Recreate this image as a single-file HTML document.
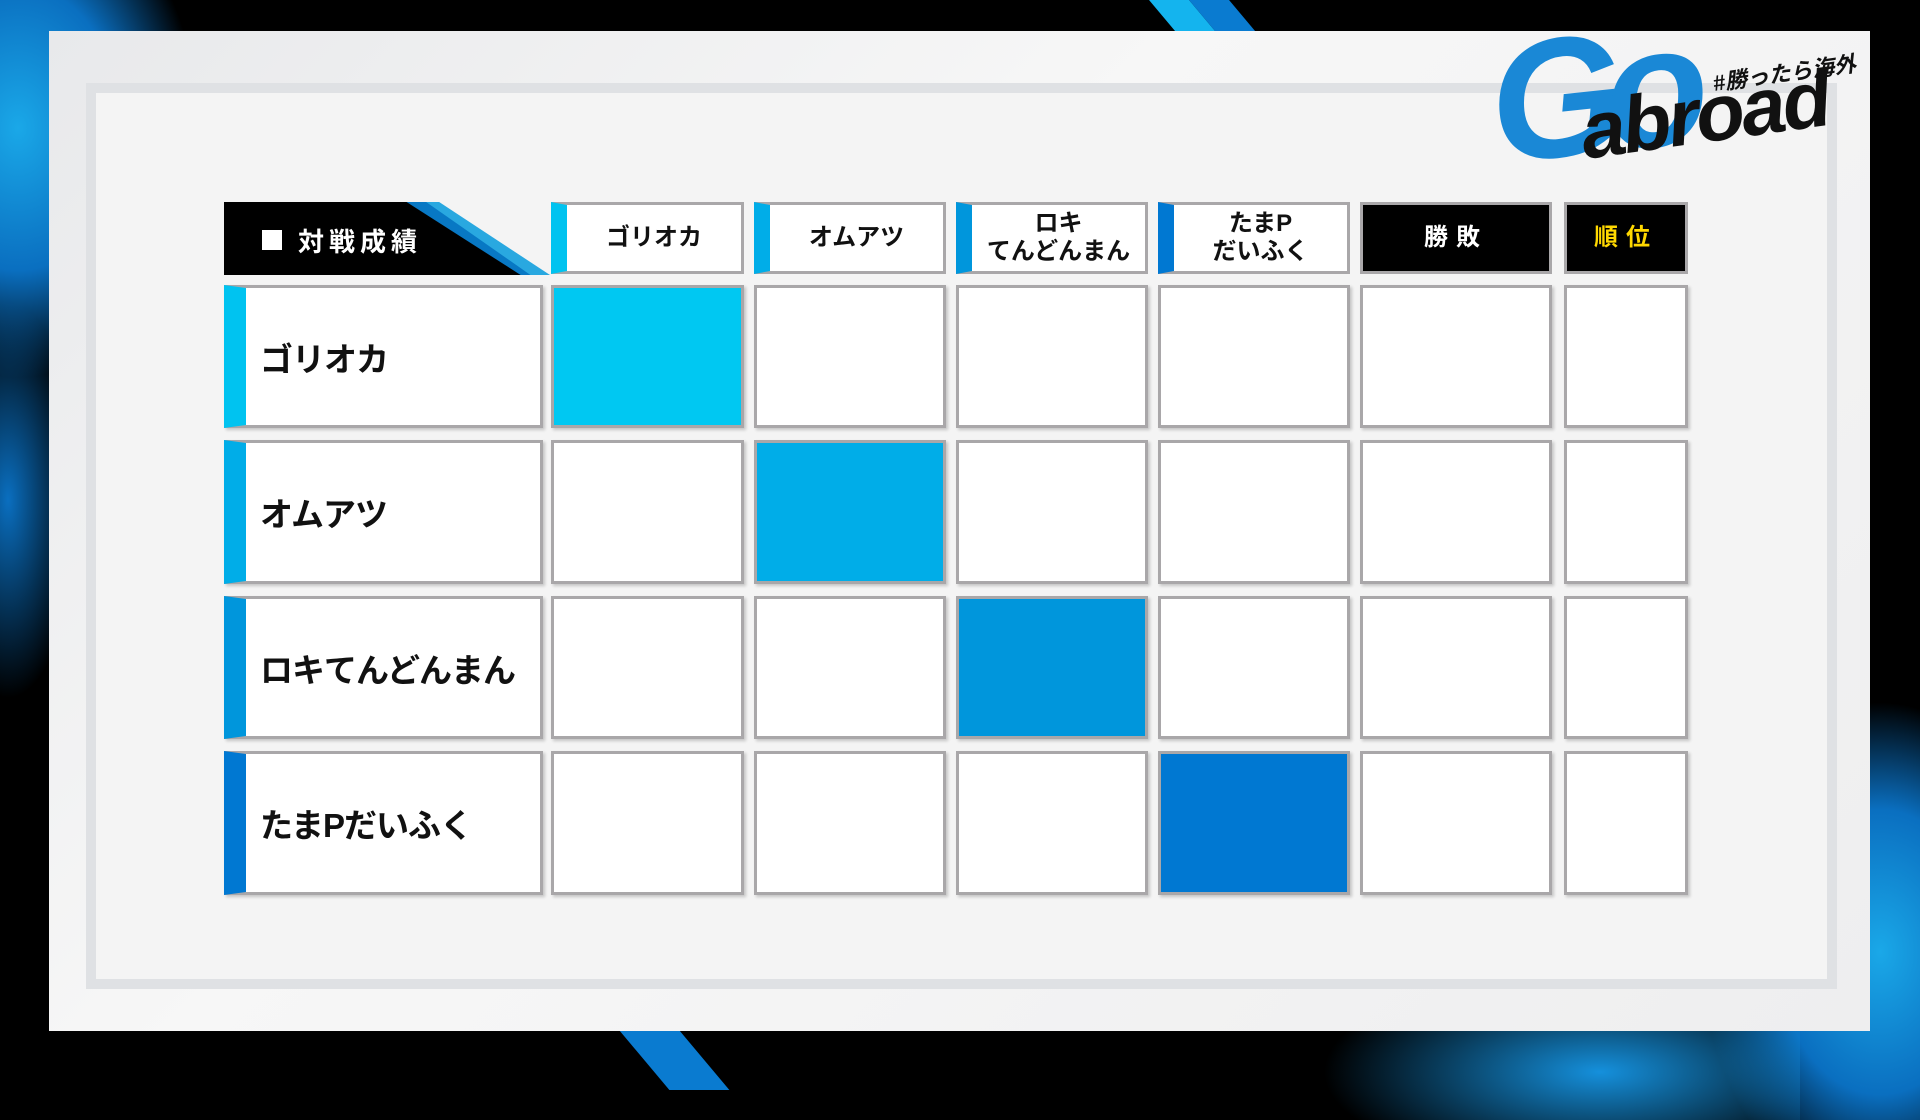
<!DOCTYPE html>
<html><head><meta charset="utf-8"><style>
*{margin:0;padding:0;box-sizing:border-box}
body{width:1920px;height:1080px;background:#000;position:relative;overflow:hidden;font-family:"Liberation Sans","Noto Sans CJK JP",sans-serif}
.abs{position:absolute}
.cell{position:absolute;background:#fff;border:3px solid #a9a7a9;box-shadow:2px 2px 3px rgba(0,0,0,.2)}
.hd{position:absolute;top:202px;height:72px;background:#fff;border:3px solid #a9a7a9;display:flex;align-items:center;justify-content:center;font-weight:bold;font-size:24px;line-height:28px;text-align:center;color:#111}
.name{font-size:33px;font-weight:bold;color:#111;display:flex;align-items:center;padding-left:14px;white-space:nowrap;letter-spacing:-1px}
</style></head><body>
<div class="abs" style="left:-60px;top:-40px;width:260px;height:420px;background:radial-gradient(ellipse at 30% 40%,#1aa8e8 0%,#0a6fc0 40%,transparent 70%)"></div>
<div class="abs" style="left:-40px;top:300px;width:120px;height:400px;background:radial-gradient(ellipse at 40% 50%,#0a6fc0 0%,transparent 70%)"></div>
<div class="abs" style="left:1700px;top:700px;width:300px;height:420px;background:radial-gradient(ellipse at 60% 60%,#1aa8e8 0%,#0a6fc0 40%,transparent 70%)"></div>
<div class="abs" style="left:1300px;top:960px;width:500px;height:160px;background:radial-gradient(ellipse at 60% 70%,#1590dc 0%,transparent 65%)"></div>
<div class="abs" style="left:1170px;top:-10px;width:40px;height:70px;background:#14b4ee;transform:skewX(40deg)"></div>
<div class="abs" style="left:1210px;top:-10px;width:40px;height:70px;background:#0a7bd0;transform:skewX(40deg)"></div>
<div class="abs" style="left:640px;top:1020px;width:60px;height:70px;background:#0a7bd0;transform:skewX(40deg)"></div>
<div class="abs" style="left:49px;top:31px;width:1821px;height:1000px;background:linear-gradient(135deg,#e8e9eb,#f7f7f7 40%,#eeeeef)"></div>
<div class="abs" style="left:86px;top:83px;width:1751px;height:906px;background:#f4f4f4;border:10px solid #dfe1e4"></div>
<!-- logo -->
<div class="abs" style="left:1490px;top:10px;font-family:'Liberation Sans',sans-serif;font-style:italic;font-weight:bold;font-size:170px;color:#1a88d6;line-height:170px;letter-spacing:-18px;transform:rotate(-6deg)">Go</div>
<div class="abs" style="left:1580px;top:70px;font-family:'Liberation Sans',sans-serif;font-style:italic;font-weight:bold;font-size:80px;color:#111;line-height:90px;transform:rotate(-8deg);letter-spacing:-3px">abroad</div>
<div class="abs" style="left:1712px;top:56px;font-size:22px;font-weight:bold;font-style:italic;color:#111;transform:rotate(-8deg);white-space:nowrap">#勝ったら海外</div>
<!-- title -->
<div class="abs" style="left:224px;top:202px;width:326px;height:73px;clip-path:polygon(0 0,66% 0,100% 100%,0 100%);background:#29a8e0"></div>
<div class="abs" style="left:224px;top:202px;width:326px;height:73px;background:#0878c4;clip-path:polygon(0 0,62% 0,94% 100%,0 100%)"></div>
<div class="abs" style="left:224px;top:202px;width:326px;height:73px;background:#000;clip-path:polygon(0 0,56% 0,91% 100%,0 100%)"></div>
<div class="abs" style="left:262px;top:230px;width:20px;height:20px;background:#fff"></div>
<div class="abs" style="left:298px;top:222px;color:#fff;font-weight:bold;font-size:26px;letter-spacing:5px">対戦成績</div>
<div class="hd" style="left:551px;width:193px;border-left:16px solid #00c3f0">ゴリオカ</div>
<div class="hd" style="left:754px;width:192px;border-left:16px solid #00ade8">オムアツ</div>
<div class="hd" style="left:956px;width:192px;border-left:16px solid #0096dc">ロキ<br>てんどんまん</div>
<div class="hd" style="left:1158px;width:192px;border-left:16px solid #0078d2">たまP<br>だいふく</div>
<div class="hd" style="left:1360px;width:192px;background:#000;color:#fff;letter-spacing:8px">勝敗</div>
<div class="hd" style="left:1564px;width:124px;background:#000;color:#ffd800;letter-spacing:8px">順位</div>
<div class="cell name" style="left:224px;top:285px;width:319px;height:143px;border-left:22px solid #00c3f0">ゴリオカ</div>
<div class="cell name" style="left:224px;top:440px;width:319px;height:144px;border-left:22px solid #00ade8">オムアツ</div>
<div class="cell name" style="left:224px;top:596px;width:319px;height:143px;border-left:22px solid #0096dc">ロキてんどんまん</div>
<div class="cell name" style="left:224px;top:751px;width:319px;height:144px;border-left:22px solid #0078d2">たまPだいふく</div>
<div class="cell" style="left:551px;top:285px;width:193px;height:143px;background:#00c8f2"></div>
<div class="cell" style="left:754px;top:285px;width:192px;height:143px"></div>
<div class="cell" style="left:956px;top:285px;width:192px;height:143px"></div>
<div class="cell" style="left:1158px;top:285px;width:192px;height:143px"></div>
<div class="cell" style="left:1360px;top:285px;width:192px;height:143px"></div>
<div class="cell" style="left:1564px;top:285px;width:124px;height:143px"></div>
<div class="cell" style="left:551px;top:440px;width:193px;height:144px"></div>
<div class="cell" style="left:754px;top:440px;width:192px;height:144px;background:#00ade8"></div>
<div class="cell" style="left:956px;top:440px;width:192px;height:144px"></div>
<div class="cell" style="left:1158px;top:440px;width:192px;height:144px"></div>
<div class="cell" style="left:1360px;top:440px;width:192px;height:144px"></div>
<div class="cell" style="left:1564px;top:440px;width:124px;height:144px"></div>
<div class="cell" style="left:551px;top:596px;width:193px;height:143px"></div>
<div class="cell" style="left:754px;top:596px;width:192px;height:143px"></div>
<div class="cell" style="left:956px;top:596px;width:192px;height:143px;background:#0096dc"></div>
<div class="cell" style="left:1158px;top:596px;width:192px;height:143px"></div>
<div class="cell" style="left:1360px;top:596px;width:192px;height:143px"></div>
<div class="cell" style="left:1564px;top:596px;width:124px;height:143px"></div>
<div class="cell" style="left:551px;top:751px;width:193px;height:144px"></div>
<div class="cell" style="left:754px;top:751px;width:192px;height:144px"></div>
<div class="cell" style="left:956px;top:751px;width:192px;height:144px"></div>
<div class="cell" style="left:1158px;top:751px;width:192px;height:144px;background:#0078d2"></div>
<div class="cell" style="left:1360px;top:751px;width:192px;height:144px"></div>
<div class="cell" style="left:1564px;top:751px;width:124px;height:144px"></div>
</body></html>
